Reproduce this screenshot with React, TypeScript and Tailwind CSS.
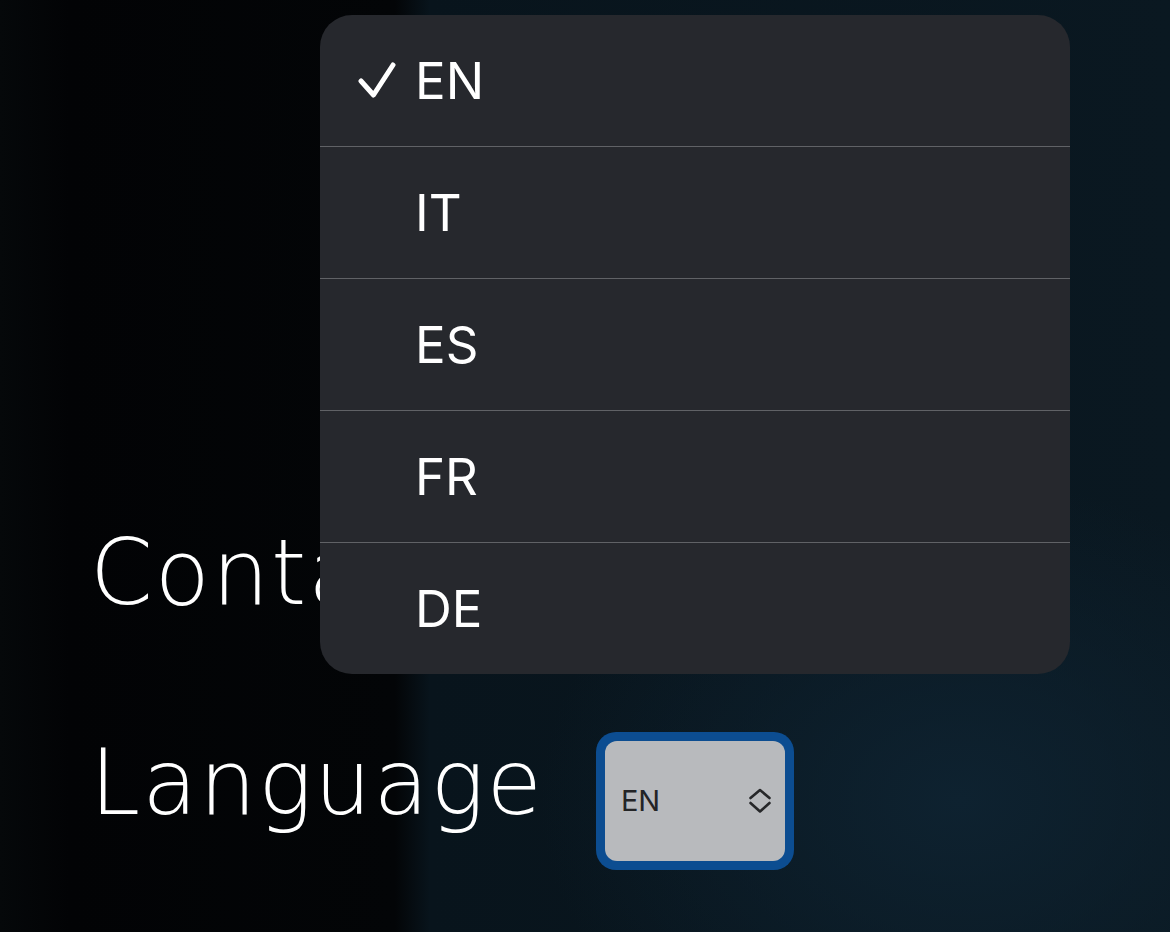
import React from "react";

const languages = ["EN", "IT", "ES", "FR", "DE"];

function Check() {
  return (
    <svg width="38" height="38" viewBox="0 0 38 38" fill="none">
      <path
        d="M3 19 L15.5 33 L35 3"
        stroke="white"
        strokeWidth="5"
        strokeLinecap="round"
        strokeLinejoin="round"
      />
    </svg>
  );
}

function UpDown() {
  return (
    <svg width="24" height="28" viewBox="0 0 24 28" fill="none">
      <path
        d="M2.5 11 L12 3 L21.5 11 M2.5 16 L12 24.5 L21.5 16"
        stroke="#262729"
        strokeWidth="2.6"
        strokeLinecap="round"
        strokeLinejoin="round"
      />
    </svg>
  );
}

export default function App() {
  const selected = "EN";

  return (
    <div className="relative h-[932px] w-[1170px] overflow-hidden bg-[radial-gradient(ellipse_420px_320px_at_960px_800px,#0e2230_0%,rgba(14,34,48,0)_100%),linear-gradient(to_right,#05080a_0px,#020305_70px,#030507_395px,#08141c_430px,#0a1821_100%)] font-['DejaVu_Sans',sans-serif] text-white">
      <main className="flex flex-col pl-[90px] pt-[528px]">
        <h2 className="text-[90px] font-extralight leading-[90px] tracking-[2px]">
          Contact
        </h2>
        <div className="mt-[114px] flex items-start gap-[52px]">
          <span className="mt-[6px] text-[90px] font-extralight leading-[90px] tracking-[2px]">
            Language
          </span>
          <div className="rounded-[20px] bg-[#0c4d91] p-[9px]">
            <div className="flex h-[120px] w-[180px] items-center justify-between rounded-[12px] bg-[#b8babd] pl-[16px] pr-[13px] font-['Inter',sans-serif] text-[29px] text-[#232426]">
              <span>{selected}</span>
              <UpDown />
            </div>
          </div>
        </div>
      </main>

      {/* open native picker */}
      <div className="absolute left-[320px] top-[15px] w-[750px] overflow-hidden rounded-[32px] bg-[#26282d] font-['Inter',sans-serif]">
        {languages.map((lang, i) => (
          <div
            key={lang}
            className={
              "flex items-center pl-[38px] " +
              (i > 0 ? "h-[132px] border-t border-[#606266]" : "h-[131px]")
            }
          >
            <div className="flex w-[57px] items-center">
              {lang === selected && <Check />}
            </div>
            <span className="text-[51px] leading-none text-white">{lang}</span>
          </div>
        ))}
      </div>
    </div>
  );
}
